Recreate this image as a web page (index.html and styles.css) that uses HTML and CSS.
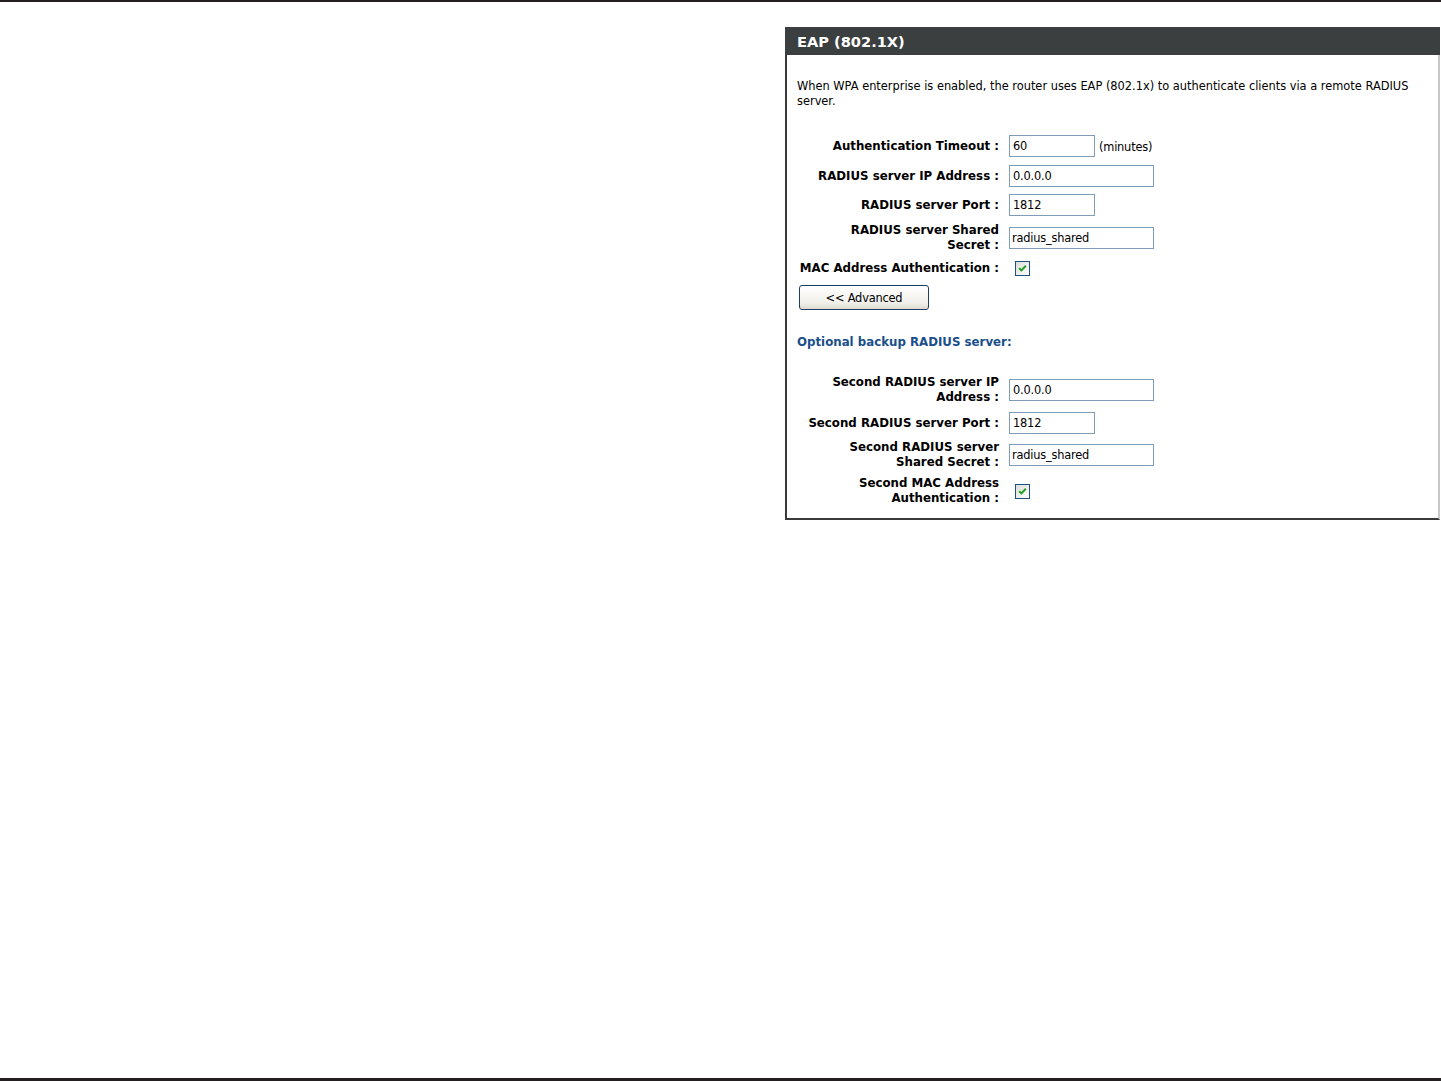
FILE: index.html
```html
<!DOCTYPE html>
<html>
<head>
<meta charset="utf-8">
<link rel="stylesheet" href="styles.css">
</head>
<body>
<div class="page">
  <div class="content">
    <section class="panel">
      <h2 class="panel-title">EAP (802.1X)</h2>
      <div class="panel-body">
        <p class="intro">When WPA enterprise is enabled, the router uses EAP (802.1x) to authenticate clients via a remote RADIUS server.</p>
        <div class="form">
          <div class="row r1">
            <label class="lbl">Authentication Timeout :</label>
            <div class="field"><span class="input short">60</span><span class="unit">(minutes)</span></div>
          </div>
          <div class="row r2">
            <label class="lbl">RADIUS server IP Address :</label>
            <div class="field"><span class="input long">0.0.0.0</span></div>
          </div>
          <div class="row r3">
            <label class="lbl">RADIUS server Port :</label>
            <div class="field"><span class="input short">1812</span></div>
          </div>
          <div class="row r4">
            <label class="lbl">RADIUS server Shared<br>Secret :</label>
            <div class="field"><span class="input long tight">radius_shared</span></div>
          </div>
          <div class="row r5">
            <label class="lbl nowrap">MAC Address Authentication :</label>
            <div class="field"><span class="check"><svg viewBox="0 0 13 13" width="13" height="13"><path d="M3.2 6.2 L5.4 8.4 L9.8 3.8" fill="none" stroke="#21a121" stroke-width="2"/></svg></span></div>
          </div>
          <div class="btn-row"><span class="btn">&lt;&lt; Advanced</span></div>
          <h3 class="subhead">Optional backup RADIUS server:</h3>
          <div class="row r6">
            <label class="lbl">Second RADIUS server IP<br>Address :</label>
            <div class="field"><span class="input long">0.0.0.0</span></div>
          </div>
          <div class="row r7">
            <label class="lbl">Second RADIUS server Port :</label>
            <div class="field"><span class="input short">1812</span></div>
          </div>
          <div class="row r8">
            <label class="lbl">Second RADIUS server<br>Shared Secret :</label>
            <div class="field"><span class="input long tight">radius_shared</span></div>
          </div>
          <div class="row r9">
            <label class="lbl">Second MAC Address<br>Authentication :</label>
            <div class="field"><span class="check"><svg viewBox="0 0 13 13" width="13" height="13"><path d="M3.2 6.2 L5.4 8.4 L9.8 3.8" fill="none" stroke="#21a121" stroke-width="2"/></svg></span></div>
          </div>
        </div>
      </div>
    </section>
  </div>
</div>
</body>
</html>
```
FILE: styles.css
```css
html, body {
  margin: 0;
  padding: 0;
  background: #ffffff;
}
body {
  font-family: "DejaVu Sans", "Liberation Sans", sans-serif;
  color: #000;
}
.page {
  height: 1081px;
  box-sizing: border-box;
  border-top: 2px solid #231f20;
  display: flex;
  flex-direction: column;
}
.content {
  flex: 1;
  border-bottom: 3px solid #231f20;
  padding-top: 25px;
  padding-left: 785px;
}
.panel {
  width: 655px;
  box-sizing: border-box;
  border-left: 2px solid #3a3a3a;
  border-bottom: 2px solid #3a3a3a;
  border-right: 2px solid #c8c8c8;
}
.panel-title {
  margin: 0 -2px 0 -2px;
  height: 28px;
  background: #3c3f40;
  color: #ffffff;
  font-size: 14.6px;
  font-weight: bold;
  line-height: 29px;
  padding-left: 12px;
}
.panel-body {
  padding: 0 10px 12px 10px;
}
.intro {
  margin: 24px 0 0 0;
  font-size: 11.4px;
  line-height: 15px;
}
.form {
  margin-top: 26px;
  display: flex;
  flex-direction: column;
}
.row {
  display: grid;
  grid-template-columns: 202px 1fr;
  column-gap: 10px;
  align-items: center;
}
.lbl {
  font-size: 11.8px;
  font-weight: bold;
  text-align: right;
  line-height: 15px;
  padding-left: 2px;
}
.lbl.nowrap { white-space: nowrap; }
.field {
  display: flex;
  align-items: center;
}
.input {
  display: inline-block;
  box-sizing: border-box;
  height: 22px;
  border: 1px solid #7f9db9;
  background: #fff;
  font-size: 11.4px;
  line-height: 20px;
  padding-left: 3px;
  letter-spacing: -0.2px;
}
.input.tight { padding-left: 2px; }
.input.short { width: 86px; }
.input.long { width: 145px; }
.unit {
  font-size: 11.4px;
  margin-left: 4px;
  margin-top: 2px;
  letter-spacing: -0.2px;
}
.check {
  display: inline-flex;
  box-sizing: border-box;
  width: 15px;
  height: 15px;
  border: 1px solid #1c5180;
  background: linear-gradient(135deg, #dcdcd7 0%, #ffffff 100%);
  margin-left: 6px;
}
.check svg { display: block; }
.r2 { margin-top: 8px; }
.r3 { margin-top: 7px; }
.r4 { margin-top: 7px; }
.r5 { margin-top: 8px; }
.btn-row {
  margin-top: 9px;
  padding-left: 2px;
  display: flex;
}
.btn {
  display: inline-flex;
  align-items: center;
  justify-content: center;
  box-sizing: border-box;
  width: 130px;
  height: 25px;
  border: 1px solid #1e3f66;
  border-radius: 3px;
  background: linear-gradient(#ffffff, #f2f1ec 70%, #dedbd0);
  font-size: 11.4px;
  letter-spacing: -0.2px;
}
.subhead {
  margin: 25px 0 0 0;
  font-size: 11.8px;
  font-weight: bold;
  color: #1a4f8b;
  line-height: 15px;
}
.r6 { margin-top: 25px; }
.r7 { margin-top: 7px; }
.r8 { margin-top: 6px; }
.r9 { margin-top: 6px; }
```
